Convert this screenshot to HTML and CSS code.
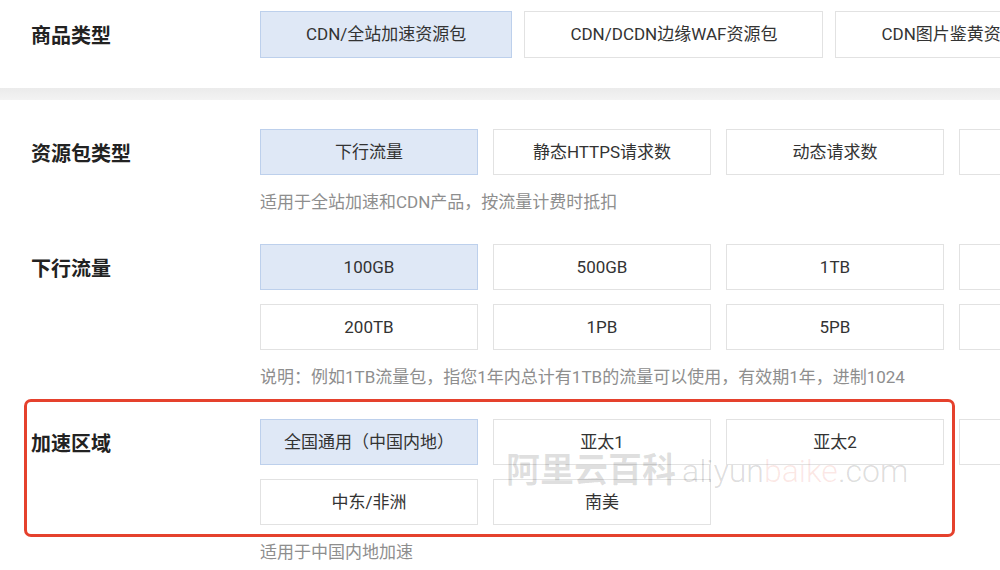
FILE: index.html
```html
<!DOCTYPE html>
<html lang="zh-CN">
<head>
  <meta charset="UTF-8">
  <meta name="viewport" content="width=device-width, initial-scale=1.0">
  <title>CDN资源包</title>
  <link rel="stylesheet" href="styles.css">
</head>
<body>
  <div class="row row-top">
    <div class="label">商品类型</div>
    <div class="options options-wide">
      <div class="opt active">CDN/全站加速资源包</div>
      <div class="opt">CDN/DCDN边缘WAF资源包</div>
      <div class="opt">CDN图片鉴黄资源包</div>
    </div>
  </div>

  <div class="band"></div>

  <div class="row row-first">
    <div class="label">资源包类型</div>
    <div class="field">
      <div class="options">
        <div class="opt active">下行流量</div>
        <div class="opt">静态HTTPS请求数</div>
        <div class="opt">动态请求数</div>
        <div class="opt"></div>
      </div>
      <p class="hint">适用于全站加速和CDN产品，按流量计费时抵扣</p>
    </div>
  </div>

  <div class="row">
    <div class="label">下行流量</div>
    <div class="field">
      <div class="options">
        <div class="opt active">100GB</div>
        <div class="opt">500GB</div>
        <div class="opt">1TB</div>
        <div class="opt"></div>
        <div class="opt">200TB</div>
        <div class="opt">1PB</div>
        <div class="opt">5PB</div>
        <div class="opt"></div>
      </div>
      <p class="hint">说明：例如1TB流量包，指您1年内总计有1TB的流量可以使用，有效期1年，进制1024</p>
    </div>
  </div>

  <div class="row row-marked">
    <div class="label">加速区域</div>
    <div class="field">
      <div class="options">
        <div class="opt active">全国通用（中国内地）</div>
        <div class="opt">亚太1</div>
        <div class="opt">亚太2</div>
        <div class="opt"></div>
        <div class="opt">中东/非洲</div>
        <div class="opt">南美</div>
      </div>
      <p class="hint">适用于中国内地加速</p>
    </div>
    <div class="marker"></div>
  </div>

  <div class="watermark">
    <span class="wm-cn">阿里云百科</span>
    <span class="wm-en">aliyun<span class="wm-pink">baike</span>.com</span>
  </div>
</body>
</html>
```

FILE: styles.css
```css
body {
  margin: 0;
  background: #fff;
  color: #333;
  font-family: Roboto, "Noto Sans CJK SC", sans-serif;
  width: 1000px;
  height: 570px;
  overflow: hidden;
  position: relative;
}

.row {
  display: flex;
  padding-top: 31px;
}

.row-top {
  padding-top: 11px;
  padding-bottom: 30px;
}

.row-first {
  padding-top: 29px;
}

.label {
  width: 229px;
  flex: none;
  padding-left: 31px;
  padding-top: 4px;
  height: 42px;
  line-height: 42px;
  font-size: 20px;
  font-weight: bold;
  color: #222;
}

.band {
  height: 12px;
  background: linear-gradient(#ebebeb, #f3f3f3);
}

.field {
  flex: none;
}

.options {
  display: grid;
  grid-template-columns: repeat(4, 218px);
  gap: 14px 15px;
}

.options-wide {
  display: flex;
  gap: 12px;
  flex: none;
}

.opt {
  box-sizing: border-box;
  height: 46px;
  line-height: 44px;
  border: 1px solid #e2e2e2;
  background: #fff;
  text-align: center;
  font-size: 17px;
  white-space: nowrap;
  overflow: hidden;
}

.options-wide .opt {
  flex: none;
  height: 47px;
  line-height: 45px;
  padding: 0 45px;
}

.opt.active {
  background: #dfe8f6;
  border-color: #bdd0ec;
}

.hint {
  margin: 16px 0 0;
  font-size: 17px;
  line-height: 22px;
  color: #8e8e8e;
  white-space: nowrap;
}

.row-marked {
  position: relative;
}

.marker {
  position: absolute;
  left: 24px;
  top: 11px;
  width: 931px;
  height: 138px;
  box-sizing: border-box;
  border: 3px solid #e5412d;
  border-radius: 7px;
  pointer-events: none;
}

.watermark {
  position: absolute;
  left: 506px;
  top: 443px;
  white-space: nowrap;
  pointer-events: none;
}

.wm-cn {
  font-size: 34px;
  font-weight: bold;
  color: rgba(0, 0, 0, 0.13);
}

.wm-en {
  font-size: 32px;
  font-weight: 300;
  color: rgba(0, 0, 0, 0.14);
  margin-left: 2px;
}

.wm-pink {
  color: rgba(230, 70, 50, 0.13);
}
```
